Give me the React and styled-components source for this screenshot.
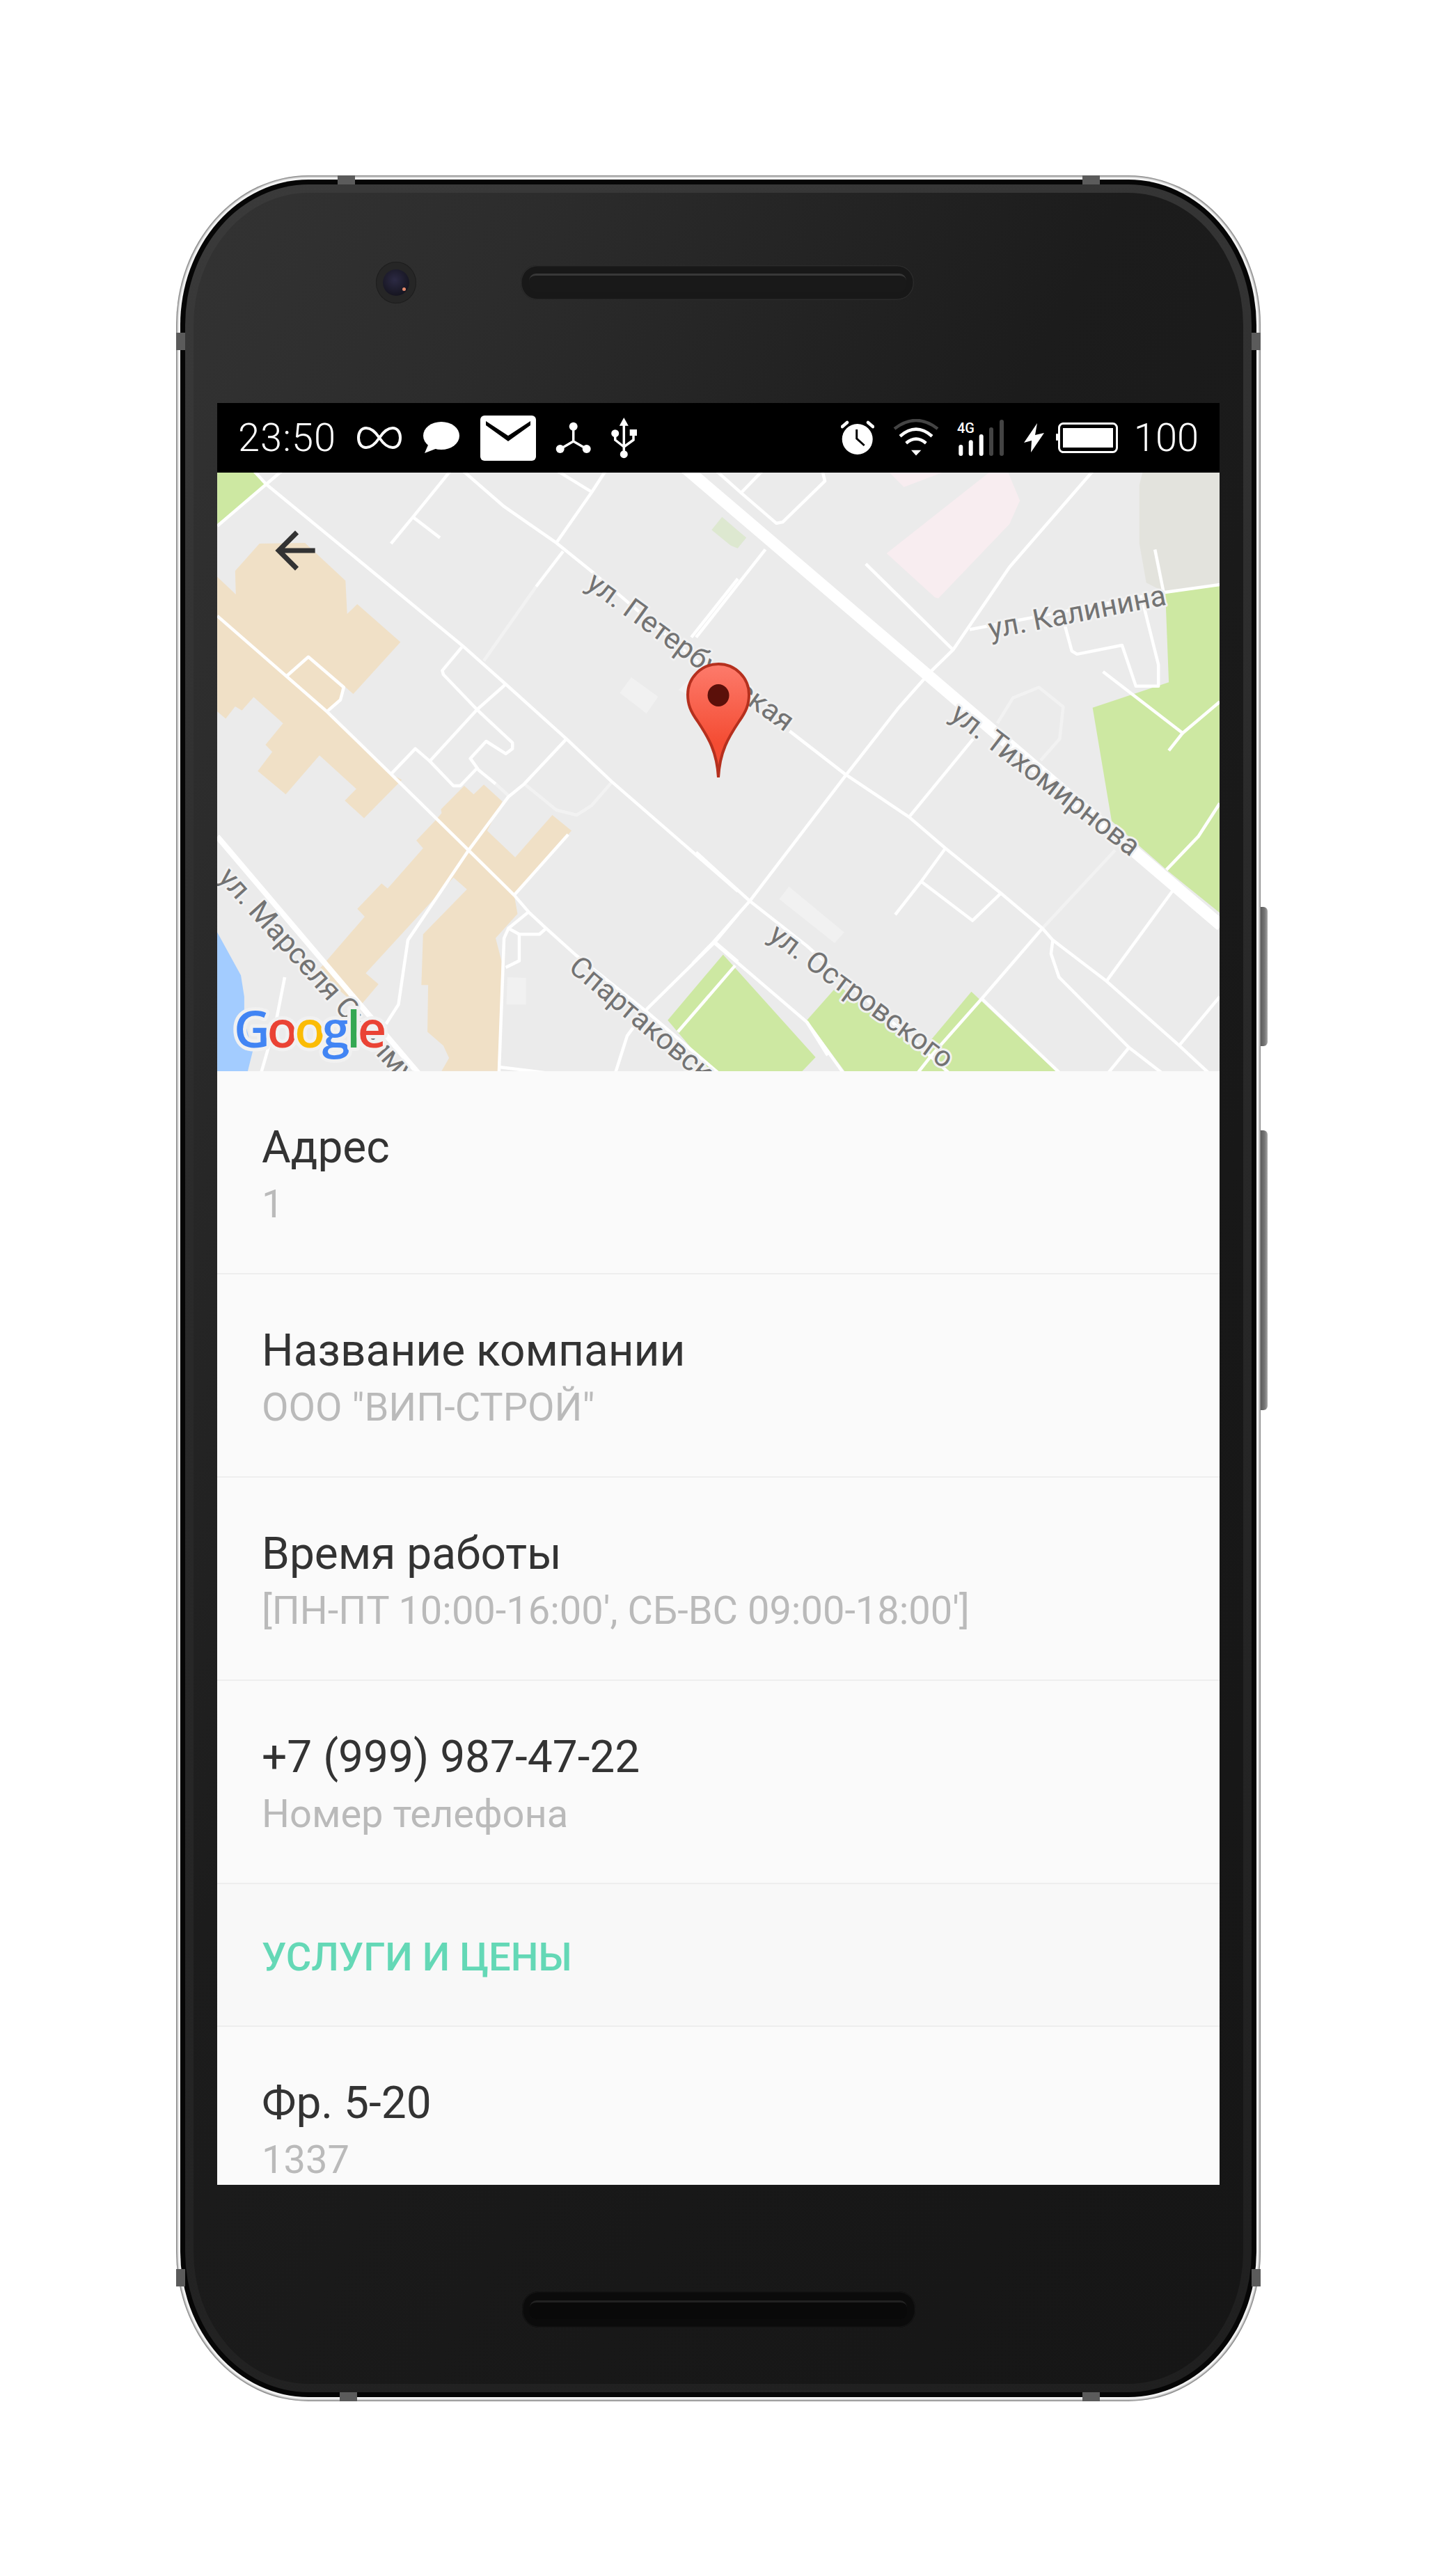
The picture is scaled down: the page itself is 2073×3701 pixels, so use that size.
import React from "react";
import styled, { createGlobalStyle } from "styled-components";

const GlobalStyle = createGlobalStyle`
  html, body {
    margin: 0;
    padding: 0;
    background: #ffffff;
    font-family: Roboto, "Noto Sans", sans-serif;
  }
`;

const Page = styled.div`
  width: 2073px;
  height: 3701px;
  padding: 252px 0 0 253px;
  box-sizing: border-box;
  overflow: hidden;
`;

// Device frame: metal band > black gap > grey ring > front panel
const Phone = styled.div`
  position: relative;
  width: 1558px;
  height: 3198px;
  box-sizing: border-box;
  padding: 6px;
  border-radius: 190px / 215px;
  background: #f7f7f7;
  box-shadow: inset 0 0 3px 1.5px #6a6a6a;
`;

const Chassis = styled.div`
  height: 100%;
  box-sizing: border-box;
  padding: 7px;
  border-radius: 184px / 209px;
  background: #060606;
`;

const Ring = styled.div`
  height: 100%;
  box-sizing: border-box;
  padding: 12px;
  border-radius: 177px / 202px;
  background: linear-gradient(160deg, #3a3a3a, #2a2a2a 40%, #1f1f1f);
`;

const Panel = styled.div`
  display: flex;
  flex-direction: column;
  height: 100%;
  box-sizing: border-box;
  padding: 0 34px;
  border-radius: 165px / 190px;
  background: linear-gradient(118deg, #333333 0, #2c2c2c 16%, #1c1c1c 42%, #181818 70%, #161616 100%);
`;

const TopBezel = styled.div`
  display: flex;
  align-items: center;
  gap: 150px;
  height: 302px;
  box-sizing: border-box;
  padding: 0 0 44px 228px;
`;

const BottomBezel = styled.div`
  display: flex;
  align-items: center;
  justify-content: center;
  height: 286px;
  box-sizing: border-box;
  padding-top: 72px;
`;

const Camera = styled.div`
  display: flex;
  align-items: center;
  justify-content: center;
  width: 58px;
  height: 60px;
  border-radius: 50%;
  background: #262626;
  box-shadow: inset 0 0 0 1px #1e1e1e;
`;

const Lens = styled.div`
  position: relative;
  width: 38px;
  height: 38px;
  border-radius: 50%;
  background: radial-gradient(circle at 45% 40%, #2c2a44, #171622 70%, #0e0e14);

  &::after {
    content: "";
    position: absolute;
    right: 5px;
    bottom: 7px;
    width: 5px;
    height: 5px;
    border-radius: 50%;
    background: #e58a6c;
  }
`;

const Speaker = styled.div`
  display: flex;
  align-items: center;
  justify-content: center;
  width: 565px;
  height: ${(p) => (p.$bottom ? 52 : 50)}px;
  box-sizing: border-box;
  border-radius: 24px;
  background: ${(p) => (p.$bottom ? "#0b0b0b" : "#181818")};
  box-shadow: inset 0 0 0 1.5px ${(p) => (p.$bottom ? "#141414" : "#2b2b2b")};
`;

const SpeakerSlot = styled.div`
  width: 542px;
  height: 27px;
  border-radius: 10px;
  background: ${(p) => (p.$bottom ? "#090909" : "#191919")};
  border-top: 3px solid ${(p) => (p.$bottom ? "#222222" : "#383838")};
  box-sizing: border-box;
`;

// Antenna bands and side keys sit over the frame
const Band = styled.div`
  position: absolute;
  background: #5b5b5b;
  ${(p) => (p.$side ? `width: 13px; height: 25px; left: ${p.$x}px; top: ${p.$y}px;` : `width: 25px; height: 13px; left: ${p.$x}px; top: ${p.$y}px;`)}
`;

const SideKey = styled.div`
  position: absolute;
  left: 100%;
  top: ${(p) => p.$top}px;
  width: 10px;
  height: ${(p) => p.$height}px;
  border-radius: 0 6px 6px 0;
  background: linear-gradient(90deg, #5c5c5c, #777777 60%, #a8a8a8);
`;

const Screen = styled.div`
  height: 2560px;
  overflow: hidden;
  background: #fafafa;
`;

const StatusBar = styled.div`
  display: flex;
  align-items: center;
  height: 100px;
  box-sizing: border-box;
  padding: 0 30px;
  background: #000000;
  color: #ffffff;
`;

const StatusText = styled.span`
  margin-left: ${(p) => p.$ml || 0}px;
  font-size: 56px;
  font-weight: 300;
  letter-spacing: ${(p) => p.$spacing || 0}px;
  line-height: 1;
`;

const StatusIcon = styled.svg`
  display: block;
  flex: none;
  margin-left: ${(p) => p.$ml || 0}px;
`;

const StatusRight = styled.div`
  display: flex;
  align-items: center;
  margin-left: auto;
`;

const MapPane = styled.div`
  position: relative;
  height: 860px;
  overflow: hidden;
  background: #ebebeb;
`;

const MapDrawing = styled.svg`
  display: block;
`;

const BackButton = styled.svg`
  position: absolute;
  left: 69px;
  top: 69px;
`;

const StreetLabel = styled.text`
  font-family: Roboto, sans-serif;
  font-size: 42px;
  fill: #737373;
  stroke: #f1f1f1;
  stroke-width: 6px;
  stroke-linejoin: round;
  paint-order: stroke;
`;

const GoogleMark = styled.text`
  font-family: "Open Sans", sans-serif;
  font-size: 72px;
  font-weight: 600;
  letter-spacing: -4.5px;
  stroke: #f1f1f1;
  stroke-width: 10px;
  stroke-linejoin: round;
  paint-order: stroke;
`;

const InfoRow = styled.div`
  height: 292px;
  box-sizing: border-box;
  padding: 70px 64px 0;
  border-bottom: 2px solid #eeeeee;
  background: #fafafa;
`;

const Title = styled.div`
  font-size: 64px;
  line-height: 80px;
  color: #333333;
`;

const Subtitle = styled.div`
  margin-top: 5px;
  font-size: 56px;
  line-height: 72px;
  color: #bababa;
  white-space: nowrap;
`;

const SectionRow = styled.div`
  height: 205px;
  box-sizing: border-box;
  padding: 69px 64px 0;
  border-bottom: 2px solid #eeeeee;
  background: #f8f8f8;
  font-size: 56px;
  font-weight: 500;
  line-height: 72px;
  color: #64d8b6;
`;

// Map geometry is traced from the reference, in two overlapping tiles
const LEFT_TILE = "translate(300 680) scale(.4847 .5612)";
const RIGHT_TILE = "translate(1000 680) scale(.4975 .5612)";

const LEFT_AREAS = [
  ["#cde8a2", "25,-5 135,-5 170,28 25,130"],
  ["#f0e0c6", "25,265 80,310 78,250 150,180 285,178 405,275 410,360 440,335 568,432 428,565 395,540 390,575 350,610 540,770 572,785 460,883 403,838 437,808 328,722 228,822 145,762 188,713 168,695 220,640 133,573 98,607 78,597 50,628 25,610"],
  ["#f0e0c6", "815,797 870,840 825,915 908,983 1018,875 1075,915 905,1080 915,1128 850,1190 868,1250 858,1530 690,1530 712,1497 695,1465 648,1430 650,1310 630,1310 635,1180 765,1065 725,1035 465,1280 503,1308 445,1367 322,1275 462,1135 440,1115 512,1050 530,1063 635,960 615,940 670,890 690,870 688,860 757,800 785,822"],
  ["#a3ccff", "25,1175 95,1285 105,1340 105,1400 130,1480 115,1532 25,1532"],
  ["#f1f1f1", "1218,562 1252,522 1332,572 1297,615"],
  ["#f1f1f1", "1392,555 1420,530 1440,575"],
  ["#f1f1f1", "885,1290 940,1292 940,1360 882,1360"],
];

const RIGHT_AREAS = [
  ["#e3e3dd", "1280,30 1290,-5 1512,-5 1512,285 1355,305 1300,280 1280,180"],
  ["#f8edf0", "550,205 850,-5 900,-5 935,70 905,130 700,320 690,318"],
  ["#f8edf0", "555,-5 600,35 720,-5"],
  ["#dde8d0", "45,145 75,112 145,165 120,192 100,185"],
  ["#cde8a2", "1355,305 1512,285 1512,1125 1358,1015 1275,950 1200,890 1145,600 1365,535"],
  ["#cde8a2", "-82,1400 78,1232 345,1495 305,1532 44,1532"],
  ["#cde8a2", "320,1400 410,1310 720,1532 430,1532"],
  ["#cde8a2", "660,1470 795,1327 1040,1532 640,1532"],
  ["#f1f1f1", "240,1090 268,1058 428,1175 400,1203"],
];

const LEFT_ROADS = [
  "135,-5 170,28 750,440 880,540 1060,680 1195,790 1568,1070",
  "25,365 350,610 540,770 770,965 905,1080 950,1125 1000,1165 1090,1235 1300,1380 1510,1535",
  "25,135 170,28 215,-5",
  "540,180 605,112 715,-5",
  "605,112 685,165",
  "755,-5 875,85 1030,178 1140,255 1568,570",
  "1035,-5 1135,48",
  "1175,-5 1135,48 1030,178",
  "1050,200 970,290",
  "1568,270 1430,420",
  "750,445 692,505 695,515 795,605 900,690 900,705 880,718 822,686 775,730 800,760 850,795",
  "880,540 795,605 655,737 725,800 745,800 795,755",
  "655,737 612,705 540,770",
  "1060,680 935,795 888,828 770,965 590,1195 562,1360 525,1410",
  "232,518 295,470 400,548 390,580 350,610",
  "1065,925 905,1080",
  "945,1125 888,1165 875,1190 860,1535",
  "888,1165 920,1180 980,1180 1000,1165",
  "920,1180 920,1248 880,1265",
  "225,1290 200,1400 155,1535",
  "1568,1130 1500,1200 1300,1370 1240,1440 1205,1535",
  "1500,1200 1568,1250",
  "1390,1430 1560,1260",
  "860,1520 1000,1535",
];

const LEFT_FADED_ROADS = [
  "970,290 815,480",
  "850,795 888,825",
  "935,795 1030,862 1090,875 1135,850 1195,790",
];

const RIGHT_ROADS = [
  "0,420 200,195",
  "60,-5 130,50 232,128 250,125 372,20 365,-5",
  "130,50 190,-5",
  "490,232 742,452",
  "1145,-5 905,240 742,452 675,510 585,600 435,770 155,1095 50,1200 -10,1255",
  "790,400 1350,305 1512,285",
  "1325,195 1350,305",
  "1290,330 1335,490 1335,545 1270,545 1230,440 1100,463 1085,455 1065,390",
  "1175,508 1405,665 1512,585",
  "1405,665 1365,710",
  "800,680 615,880",
  "1512,845 1450,930 1358,1015",
  "270,660 430,770 615,880 720,960 880,1075 1000,1165 1030,1195 1185,1300 1395,1465 1480,1535",
  "0,970 155,1095 320,1210 730,1535",
  "50,1200 320,1405 425,1535",
  "320,1405 380,1490",
  "720,960 650,1045 575,1130",
  "650,1045 798,1145 880,1075",
  "1000,1165 825,1345 680,1490 640,1535",
  "1375,1070 1185,1300",
  "1030,1195 1025,1230 1048,1290 1250,1470 1345,1535",
  "1250,1470 1190,1535",
  "1512,1340 1395,1465",
  "825,1345 1050,1535",
];

const RIGHT_FADED_ROADS = [
  "870,640 915,575 990,548 1060,598 1050,680 995,735",
  "1210,965 1000,1165",
];

const STREET_LABELS = [
  ["ул. Петербургская", 840, 843, 36],
  ["ул. Калинина", 1423, 918, -11],
  ["ул. Тихомирнова", 1363, 1031, 37.5],
  ["ул. Островского", 1102, 1348, 36.5],
  ["ул. Марселя Сиримуха", 312, 1262, 48],
  ["Спартаковская", 815, 1393, 40],
];

const Areas = ({ items }) =>
  items.map(([fill, points]) => <polygon key={points} fill={fill} points={points} />);

const Roads = ({ items, color, width }) =>
  items.map((points) => (
    <polyline
      key={points}
      points={points}
      fill="none"
      stroke={color}
      strokeWidth={width}
      strokeLinejoin="round"
      vectorEffect="non-scaling-stroke"
    />
  ));

const MapView = () => (
  <MapDrawing width="1440" height="860" viewBox="312 679 1440 860">
    <g transform={LEFT_TILE}>
      <Areas items={LEFT_AREAS} />
    </g>
    <g transform={RIGHT_TILE}>
      <Areas items={RIGHT_AREAS} />
    </g>
    <g transform={LEFT_TILE}>
      <Roads items={LEFT_FADED_ROADS} color="#f2f2f2" width="4.5" />
      <Roads items={LEFT_ROADS} color="#ffffff" width="4.5" />
      <Roads items={["25,930 620,1535"]} color="#ffffff" width="8" />
    </g>
    <g transform={RIGHT_TILE}>
      <Roads items={RIGHT_FADED_ROADS} color="#f2f2f2" width="4.5" />
      <Roads items={RIGHT_ROADS} color="#ffffff" width="4.5" />
      <Roads items={["-184,-129 66,60 1516,1158"]} color="#ffffff" width="17" />
    </g>
    {STREET_LABELS.map(([text, x, y, angle]) => (
      <StreetLabel key={text} x={x} y={y} transform={`rotate(${angle} ${x} ${y})`}>
        {text}
      </StreetLabel>
    ))}
    <defs>
      <linearGradient id="pinFill" x1="0" y1="0" x2="0" y2="1">
        <stop offset="0" stopColor="#fd7b6c" />
        <stop offset="0.7" stopColor="#f44c33" />
      </linearGradient>
    </defs>
    <path
      d="M1032 1117C1030 1080 1018 1060 1002 1036C992 1022 988 1012 988 998A44 44 0 0 1 1076 998C1076 1012 1072 1022 1062 1036C1046 1060 1034 1080 1032 1117Z"
      fill="url(#pinFill)"
      stroke="#b5301e"
      strokeWidth="4"
    />
    <ellipse cx="1032" cy="999" rx="15.5" ry="16" fill="#5b100a" />
    <GoogleMark x="336" y="1505">
      <tspan fill="#4285f4">G</tspan>
      <tspan fill="#ea4335">o</tspan>
      <tspan fill="#fbbc05">o</tspan>
      <tspan fill="#4285f4">g</tspan>
      <tspan fill="#34a853">l</tspan>
      <tspan fill="#ea4335">e</tspan>
    </GoogleMark>
  </MapDrawing>
);

const StatusLeftIcons = () => (
  <>
    <StatusIcon $ml={29} width="66" height="34" viewBox="0 0 66 34">
      <path
        d="M33 17C27 8 21 3 14 3C7 3 3 9 3 17C3 25 7 31 14 31C21 31 27 26 33 17C39 8 45 3 52 3C59 3 63 9 63 17C63 25 59 31 52 31C45 31 39 26 33 17Z"
        fill="none"
        stroke="#fff"
        strokeWidth="4"
      />
    </StatusIcon>
    <StatusIcon $ml={29} width="54" height="46" viewBox="0 0 54 46">
      <ellipse cx="27" cy="20" rx="26" ry="20" fill="#fff" />
      <path d="M9 31L3 45L21 38Z" fill="#fff" />
    </StatusIcon>
    <StatusIcon $ml={29} width="80" height="65" viewBox="0 0 80 65">
      <rect width="80" height="65" rx="6" fill="#fff" />
      <path d="M8 8L40 29L72 8V14L40 37L8 14Z" fill="#000" />
    </StatusIcon>
    <StatusIcon $ml={28} width="51" height="46" viewBox="0 0 51 46">
      <path d="M25.7 7V28M25.7 28L7 39M25.7 28L44.7 39" fill="none" stroke="#fff" strokeWidth="3.5" />
      <circle cx="25.7" cy="6.7" r="6" fill="#fff" />
      <circle cx="6.7" cy="39" r="6" fill="#fff" />
      <circle cx="44.7" cy="39" r="6" fill="#fff" />
    </StatusIcon>
    <StatusIcon $ml={28} width="40" height="60" viewBox="0 0 40 60">
      <path d="M19.3 1L25.8 12.7H12.8Z" fill="#fff" />
      <path d="M19.3 12V53M6.7 24V33L19.3 43M33 27V33L19.3 43" fill="none" stroke="#fff" strokeWidth="3.5" />
      <circle cx="19.3" cy="53.7" r="5.5" fill="#fff" />
      <circle cx="6.7" cy="23.7" r="5.5" fill="#fff" />
      <rect x="27.7" y="18" width="10.3" height="9" fill="#fff" />
    </StatusIcon>
  </>
);

const SIGNAL_BARS = [
  [6.3, 36, "#fff"],
  [20.7, 29.3, "#fff"],
  [35.7, 21, "#fff"],
  [50, 11, "#444"],
  [65, 0, "#444"],
];

const StatusRightIcons = () => (
  <StatusRight>
    <StatusIcon width="48" height="50" viewBox="0 0 48 50">
      <circle cx="23.7" cy="27" r="22" fill="#fff" />
      <path d="M2 9L9 3M46 9L39 3" stroke="#fff" strokeWidth="4.5" strokeLinecap="round" />
      <path d="M22.7 13V26L33.7 36" fill="none" stroke="#000" strokeWidth="3" />
    </StatusIcon>
    <StatusIcon $ml={27} width="66" height="54" viewBox="0 0 66 54">
      <path d="M2 14Q33 -10 64 14" fill="none" stroke="#444" strokeWidth="4.5" />
      <path d="M10 24.7Q33 4.7 56 24.7M18.7 34.7Q33 22.7 47.3 34.7" fill="none" stroke="#fff" strokeWidth="4.5" />
      <path d="M26 44.7H40.4L33 52.5Z" fill="#fff" />
    </StatusIcon>
    <StatusIcon $ml={25} width="72" height="52" viewBox="0 0 72 52">
      <text x="1" y="18.5" fill="#fff" fontFamily="Roboto, sans-serif" fontSize="20" fontWeight="500">
        4G
      </text>
      {SIGNAL_BARS.map(([x, y, fill]) => (
        <rect key={x} x={x - 3} y={y} width="6" height={52 - y} rx="3" fill={fill} />
      ))}
    </StatusIcon>
    <StatusIcon $ml={25} width="29" height="42" viewBox="0 0 29 42">
      <polygon points="19,0 0,28 11,25 10,42 29,14 16,17" fill="#fff" />
    </StatusIcon>
    <StatusIcon $ml={17} width="89" height="44" viewBox="0 0 89 44">
      <rect x="4.5" y="1.5" width="83" height="41" rx="6" fill="none" stroke="#fff" strokeWidth="3" />
      <rect x="10" y="8" width="72" height="28" fill="#fff" />
      <rect y="16" width="3" height="10" rx="1" fill="#fff" />
    </StatusIcon>
    <StatusText $ml={23}>100</StatusText>
  </StatusRight>
);

const ROWS = [
  ["Адрес", "1"],
  ["Название компании", 'ООО "ВИП-СТРОЙ"'],
  ["Время работы", "[ПН-ПТ 10:00-16:00', СБ-ВС 09:00-18:00']"],
  ["+7 (999) 987-47-22", "Номер телефона"],
];

const BANDS = [
  { $x: 232, $y: 0 },
  { $x: 1302, $y: 0 },
  { $side: true, $x: 0, $y: 226 },
  { $side: true, $x: 1545, $y: 226 },
  { $x: 235, $y: 3185 },
  { $x: 1302, $y: 3185 },
  { $side: true, $x: 0, $y: 3008 },
  { $side: true, $x: 1545, $y: 3008 },
];

export default function App() {
  return (
    <Page>
      <GlobalStyle />
      <Phone>
        {BANDS.map((band) => (
          <Band key={`${band.$x}-${band.$y}`} {...band} />
        ))}
        <SideKey $top={1051} $height={200} />
        <SideKey $top={1372} $height={402} />
        <Chassis>
          <Ring>
            <Panel>
              <TopBezel>
                <Camera>
                  <Lens />
                </Camera>
                <Speaker>
                  <SpeakerSlot />
                </Speaker>
              </TopBezel>
              <Screen>
                <StatusBar>
                  <StatusText $spacing={1}>23:50</StatusText>
                  <StatusLeftIcons />
                  <StatusRightIcons />
                </StatusBar>
                <MapPane>
                  <MapView />
                  <BackButton width="86" height="86" viewBox="0 0 24 24">
                    <path d="M20 11H7.83l5.59-5.59L12 4l-8 8 8 8 1.41-1.41L7.83 13H20v-2z" fill="#333" />
                  </BackButton>
                </MapPane>
                {ROWS.map(([title, subtitle]) => (
                  <InfoRow key={title}>
                    <Title>{title}</Title>
                    <Subtitle>{subtitle}</Subtitle>
                  </InfoRow>
                ))}
                <SectionRow>УСЛУГИ И ЦЕНЫ</SectionRow>
                <InfoRow>
                  <Title>Фр. 5-20</Title>
                  <Subtitle>1337</Subtitle>
                </InfoRow>
              </Screen>
              <BottomBezel>
                <Speaker $bottom>
                  <SpeakerSlot $bottom />
                </Speaker>
              </BottomBezel>
            </Panel>
          </Ring>
        </Chassis>
      </Phone>
    </Page>
  );
}
